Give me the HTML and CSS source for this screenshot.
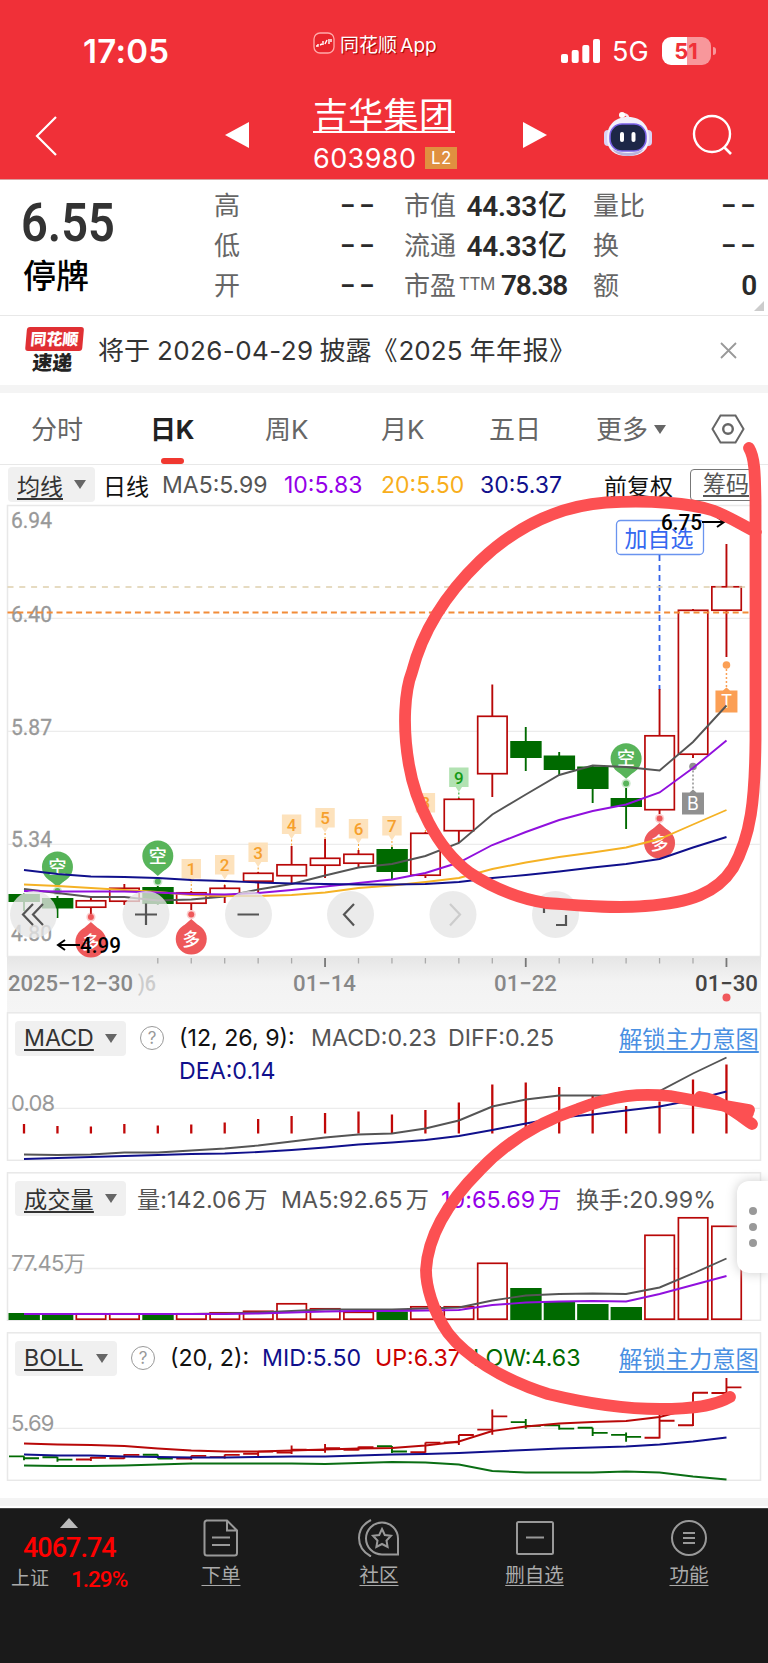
FILE: index.html
```html
<!DOCTYPE html>
<html lang="zh-CN">
<head>
	<meta charset="utf-8">
	<title>吉华集团 603980</title>
	<link rel="stylesheet" href="styles.css">
</head>
<body>
<header class="top">
	<div class="status">
		<span class="clock">17:05</span>
		<div class="brand">
			<svg width="22" height="22" viewBox="0 0 22 22"><rect x="1" y="1" width="20" height="20" rx="6" fill="#e8242c" stroke="#ffa9a9" stroke-width="1.3"/><path d="M3 14h2v-2M7 13l2-1M10 9v4M12 12l2-4M16 7v5M18 7v3" fill="none" stroke="#fff" stroke-width="1.4"/></svg>
			<span>同花顺 App</span>
		</div>
		<div class="signal">
			<svg width="39" height="25" viewBox="0 0 39 25" fill="#fff"><rect y="15" width="7" height="9" rx="2"/><rect x="10.7" y="11" width="7" height="13" rx="2"/><rect x="21.3" y="6" width="7" height="18" rx="2"/><rect x="32" width="7" height="24" rx="2"/></svg>
			<span class="net">5G</span>
			<span class="battery"><b>51</b></span><i class="tip"></i>
		</div>
	</div>
	<div class="nav">
		<svg class="back" width="24" height="42" viewBox="0 0 24 42"><path d="M22 2L3 21L22 40" fill="none" stroke="#fff" stroke-width="2.2"/></svg>
		<svg class="prev" width="24" height="26" viewBox="0 0 24 26"><path d="M24 0V26L0 13Z" fill="#fff"/></svg>
		<div class="stock">
			<a class="name">吉华集团</a>
			<div class="code"><span>603980</span><em>L2</em></div>
		</div>
		<svg class="next" width="24" height="26" viewBox="0 0 24 26"><path d="M0 0V26L24 13Z" fill="#fff"/></svg>
		<svg class="robot" width="48" height="46" viewBox="0 0 48 46">
			<path d="M24 8Q25 4 19 3" fill="none" stroke="#f4e8f4" stroke-width="2.5"/><circle cx="18" cy="4" r="3" fill="#fff"/>
			<rect x="0" y="19" width="8" height="16" rx="4" fill="#d9d2f5"/><rect x="40" y="19" width="8" height="16" rx="4" fill="#d9d2f5"/>
			<path d="M24 6C39 6 45 16 45 27C45 39 38 45 24 45S3 39 3 27C3 16 9 6 24 6Z" fill="#f2f0fb"/>
			<path d="M8 38Q24 46 40 38Q35 45 24 45T8 38Z" fill="#b9b2dc"/>
			<rect x="6" y="13" width="36" height="27" rx="12" fill="#1d2747" stroke="#7b62e8" stroke-width="1.6"/>
			<rect x="16" y="21" width="4" height="10" rx="2" fill="#fff"/><rect x="27.5" y="21" width="4" height="10" rx="2" fill="#fff"/>
		</svg>
		<svg class="search" width="42" height="42" viewBox="0 0 42 42"><circle cx="20" cy="20" r="18" fill="none" stroke="#fff" stroke-width="2.4"/><path d="M32 33L39 40" stroke="#fff" stroke-width="2.6"/></svg>
	</div>
</header>

<section class="quote">
	<div class="price"><b>6.55</b><span>停牌</span></div>
	<dl class="c1">
		<dt>高</dt><dd class="none">--</dd>
		<dt>低</dt><dd class="none">--</dd>
		<dt>开</dt><dd class="none">--</dd>
	</dl>
	<dl class="c2">
		<dt>市值</dt><dd>44.33<i>亿</i></dd>
		<dt>流通</dt><dd>44.33<i>亿</i></dd>
		<dt>市盈<sup>TTM</sup></dt><dd class="pe">78.38</dd>
	</dl>
	<dl class="c3">
		<dt>量比</dt><dd class="none">--</dd>
		<dt>换</dt><dd class="none">--</dd>
		<dt>额</dt><dd>0</dd>
	</dl>
	<i class="corner"></i>
</section>

<section class="notice">
	<div class="express"><b>同花顺</b><span>速递</span></div>
	<p>将于<span class="d1">2026-04-29</span>披露<span class="bk">《</span>2025<span class="d2">年年报》</span></p>
	<svg width="17" height="17" viewBox="0 0 17 17"><path d="M1 1L16 16M16 1L1 16" stroke="#999" stroke-width="1.8"/></svg>
</section>

<nav class="tabs">
	<span>分时</span>
	<span class="on">日K</span>
	<span>周K</span>
	<span>月K</span>
	<span>五日</span>
	<span>更多<i class="tri"></i></span>
	<svg width="34" height="30" viewBox="0 0 34 30" fill="none" stroke="#666" stroke-width="2"><path d="M9.500 1.500H24.500L32.500 15L24.500 28.500H9.500L1.500 15Z"/><circle cx="17" cy="15" r="4.800" stroke-width="2.400"/></svg>
</nav>

<div class="ma">
	<span class="pill"><u>均线</u><i class="tri"></i></span>
	<span class="blk">日线</span>
	<span>MA5:5.99</span>
	<span class="purple">10:5.83</span>
	<span class="yellow">20:5.50</span>
	<span class="navy">30:5.37</span>
	<span class="blk">前复权</span>
	<span class="chips"><u>筹码</u></span>
</div>

<svg id="kline" width="768" height="508" viewBox="0 504 768 508">
	<defs>
		<linearGradient id="fade" x1="0" y1="0" x2="0" y2="1"><stop offset="0" stop-color="#e6e6e6"/><stop offset=".45" stop-color="#f3f3f3"/><stop offset="1" stop-color="#f5f5f5"/></linearGradient>
	</defs>
	<rect x="7" y="957" width="754" height="55" fill="url(#fade)"/>
	<rect x="7.500" y="505.500" width="753" height="451" fill="#fff" stroke="#e8e8e8" stroke-width="1.500"/>
	<path d="M8 618.300H760M8 731.300H760M8 844.300H760" stroke="#ececec" stroke-width="1.300"/>
	<g class="axis">
		<text x="11" y="528" textLength="41" lengthAdjust="spacingAndGlyphs">6.94</text>
		<text x="11" y="621.500" textLength="41" lengthAdjust="spacingAndGlyphs">6.40</text>
		<text x="11" y="734.500" textLength="41" lengthAdjust="spacingAndGlyphs">5.87</text>
		<text x="11" y="847" textLength="41" lengthAdjust="spacingAndGlyphs">5.34</text>
		<text x="11" y="941" textLength="41" lengthAdjust="spacingAndGlyphs">4.80</text>
	</g>
	<rect x="616.500" y="520.500" width="87" height="34" rx="4" fill="#fff" stroke="#6a94ef" stroke-width="1.300"/>
	<text x="659" y="546.500" class="fav">加自选</text>
	<path d="M659.500 555V690" stroke="#3263e8" stroke-width="1.800" stroke-dasharray="6 4"/>
	<g id="candles"></g>
	<path d="M7.500 587H746" stroke="#decfad" stroke-width="1.700" stroke-dasharray="6 5.800"/>
	<path d="M7.500 612.500H752" stroke="#f28c38" stroke-width="2" stroke-dasharray="6 3.800"/>
	<g id="pins"></g>
	<g id="averages"></g>
	<g class="mark">
		<text x="661" y="530" textLength="41" lengthAdjust="spacingAndGlyphs">6.75</text>
		<path d="M702 522H724M717 517L724 522L717 527"/>
		<path d="M80 945H58M65 940L58 945L65 950"/>
		<text x="80" y="953" textLength="41" lengthAdjust="spacingAndGlyphs">4.99</text>
	</g>
	<g id="ticks"></g>
	<g class="date">
		<text x="8" y="991" textLength="125" lengthAdjust="spacingAndGlyphs">2025−12−30</text>
		<text x="138" y="991" textLength="18" lengthAdjust="spacingAndGlyphs" class="ghost">)6</text>
		<text x="293" y="991" textLength="63" lengthAdjust="spacingAndGlyphs">01−14</text>
		<text x="494" y="991" textLength="63" lengthAdjust="spacingAndGlyphs">01−22</text>
		<text x="695" y="991" textLength="63" lengthAdjust="spacingAndGlyphs" class="last">01−30</text>
	</g>
	<circle cx="726.500" cy="997.500" r="4" fill="#f0585c"/>
	<g class="tools">
		<circle cx="33.500" cy="914.500" r="23.500"/><circle cx="146" cy="914.500" r="23.500"/><circle cx="248.500" cy="914.500" r="23.500"/>
		<circle cx="350.500" cy="914.500" r="23.500"/><circle cx="453" cy="914.500" r="23.500"/><circle cx="555.500" cy="914.500" r="23.500"/>
		<path d="M33 904L23 914.500L33 925M43 904L33 914.500L43 925M135 914.500H157M146 903.500V925M237.500 914.500H259M354 904L344 914.500L354 925.500"/>
		<path d="M450 904L460 914.500L450 925.500" class="off"/>
		<path d="M566 915V925H556M554 904H544V913"/>
	</g>
</svg>

<section class="panel">
	<svg id="macd" class="plot" width="768" height="149" viewBox="0 1012 768 149">
		<rect x="7.500" y="1012.800" width="753" height="147.500" class="frame"/>
		<path d="M8 1108.300H760" class="grid"/>
	</svg>
	<div class="legend macd">
		<span class="pill"><u>MACD</u><i class="tri"></i></span>
		<i class="help">?</i>
		<span class="blk">(12, 26, 9):</span>
		<span>MACD:0.23</span>
		<span>DIFF:0.25</span>
		<a>解锁主力意图</a>
		<span class="navy dea">DEA:0.14</span>
	</div>
	<span class="scale">0.08</span>
</section>

<section class="panel">
	<svg id="volume" class="plot" width="768" height="149" viewBox="0 1172 768 149">
		<rect x="7.500" y="1172.800" width="753" height="147.500" class="frame"/>
		<path d="M8 1268.500H760" class="grid"/>
	</svg>
	<div class="legend volume">
		<span class="pill"><u>成交量</u><i class="tri"></i></span>
		<span>量:142.06<i>万</i></span>
		<span>MA5:92.65<i>万</i></span>
		<span class="purple">10:65.69<i>万</i></span>
		<span>换手:20.99%</span>
	</div>
	<span class="scale">77.45万</span>
	<div class="handle"><i></i><i></i><i></i></div>
</section>

<section class="panel">
	<svg id="boll" class="plot" width="768" height="149" viewBox="0 1332 768 149">
		<rect x="7.500" y="1332.800" width="753" height="147.500" class="frame"/>
		<path d="M8 1428.300H760" class="grid"/>
	</svg>
	<div class="legend boll">
		<span class="pill"><u>BOLL</u><i class="tri"></i></span>
		<i class="help">?</i>
		<span class="blk">(20, 2):</span>
		<span class="navy">MID:5.50</span>
		<span class="red">UP:6.37</span>
		<span class="green">LOW:4.63</span>
		<a>解锁主力意图</a>
	</div>
	<span class="scale">5.69</span>
</section>

<footer class="bar">
	<div class="index">
		<i class="up"></i>
		<b>4067.74</b>
		<p><span>上证</span><em>1.29%</em></p>
	</div>
	<a>
		<svg width="36" height="38" viewBox="0 0 36 38"><path d="M3 1.500H24L34 11.500V34Q34 36.500 31.500 36.500H4Q1.500 36.500 1.500 34V4Q1.500 1.500 4 1.500M24 1.500V11.500H34M9 18.500H27M9 26H27"/></svg>
		<span>下单</span>
	</a>
	<a>
		<svg width="42" height="38" viewBox="0 0 42 38"><path d="M24 3.500A16 16 0 0 0 24 35.500H40V19.500A16 16 0 0 0 24 3.500Z"/><path d="M24 10L26.800 16L33 16.800L28.500 21.500L29.600 28L24 25L18.400 28L19.500 21.500L15 16.800L21.200 16ZM13 1C-3 9 -3 29 13 37.500"/></svg>
		<span>社区</span>
	</a>
	<a>
		<svg width="38" height="38" viewBox="0 0 38 38"><rect x="1" y="3" width="36" height="32" rx="1.500"/><path d="M10 18.500H28"/></svg>
		<span>删自选</span>
	</a>
	<a>
		<svg width="38" height="38" viewBox="0 0 38 38"><circle cx="19" cy="19" r="17"/><path d="M13 14H25M13 19H25M13 24H25"/></svg>
		<span>功能</span>
	</a>
</footer>

<svg class="ink" width="768" height="1663" viewBox="0 0 768 1663">
	<path d="M749 448C755 458 755 475 755.500 500V740C755 800 751 836 733 868C717 893 690 903 645 906C610 909 575 905 546 903C515 898 490 886 470 873C435 847 415 800 409 765C402 725 405 690 412 672C424 625 450 590 480 561C518 525 560 506 606 502.500C650 500 690 503 713 510.500C730 517 740 524 756 532"/>
	<path d="M730 1397C718 1404 700 1409 660 1409C620 1409 585 1403 548 1394C500 1379 465 1355 448 1333C432 1310 426 1285 426 1270C428 1235 450 1200 480 1170C510 1138 545 1120 578 1109C615 1095 640 1093 670 1096L720 1105L749 1110M700 1097C720 1100 735 1112 752 1124M715 1103L748 1113"/>
</svg>
<script src="script.js"></script>
</body>
</html>
```

FILE: styles.css
```css
body {
	margin: 0; background: #fff; color: #333;
	width: 768px; height: 1663px; overflow: hidden; position: relative;
	font-family: Inter, "Noto Sans CJK SC", sans-serif;
}
i, em { font-style: normal; }
dl, dd, p { margin: 0; }
svg { display: block; flex: none; }
span, b, a { white-space: nowrap; }
.tri {
	display: inline-block;
	border: 6.5px solid transparent; border-top: 9px solid #666; border-bottom: 0;
}
.blk { color: #111; }
.purple { color: #9400e8; }
.yellow { color: #f8ae1c; }
.navy { color: #10108c; }
.red { color: #c00; }
.green { color: #006a00; }

/* header */
.top { height: 180px; background: #f03038; color: #fff; border-bottom: 1px solid #d9a0a0; box-sizing: border-box; }
.status { display: grid; grid-template-columns: 313px 248px 1fr; height: 96px; padding-top: 2px; box-sizing: border-box; align-items: center; }
.clock { padding-left: 83px; font-size: 33px; font-weight: 600; letter-spacing: .3px; padding-top: 4px; }
.brand { display: flex; align-items: center; gap: 5px; font-size: 19px; padding-bottom: 12px; text-shadow: 1px 1px 1px #900; }
.brand span { word-spacing: -2px; }
.signal { display: flex; align-items: center; padding-top: 4px; }
.net { font-size: 27px; margin: 0 13px 0 12px; }
.battery {
	width: 49px; height: 28px; border-radius: 9px; color: #f03038; text-align: center; line-height: 28px;
	font-size: 22px; background: linear-gradient(90deg, #fff 51%, #f8979b 51%);
}
.tip { width: 3px; height: 8px; margin-left: 2px; border-radius: 0 4px 4px 0; background: #f8979b; }
.nav { display: flex; align-items: flex-start; height: 83px; }
.back { margin: 19px 0 0 34px; }
.prev { margin: 26px 0 0 167px; }
.stock { width: 145px; margin-left: 64px; }
.name { display: block; font-size: 35px; line-height: 36px; height: 36px; width: 142px; border-bottom: 2px solid #fff; letter-spacing: .3px; margin-top: 1px; box-sizing: border-box; }
.code { display: flex; align-items: center; height: 42px; gap: 9px; font-size: 27px; letter-spacing: .4px; margin-top: 4px; }
.code em { width: 32px; height: 22px; background: #e09040; font-size: 17px; line-height: 22px; text-align: center; }
.next { margin: 26px 0 0 65px; }
.robot { margin: 15px 0 0 57px; }
.search { margin: 18px 0 0 40px; }

/* quote */
.quote { display: flex; height: 135px; position: relative; border-bottom: 1px solid #e8e8e8; }
.price { width: 214px; padding: 14px 0 0 21px; box-sizing: border-box; }
.price b { display: block; font: 600 54px/58px Roboto; transform: scaleX(.87); transform-origin: 0 0; }
.price span { display: block; font-size: 33px; font-weight: 500; line-height: 40px; color: #000; margin-top: 4px; padding-left: 2px; }
.quote dl { display: grid; grid-template-columns: 52px 1fr; grid-auto-rows: 40px; line-height: 40px; padding-top: 6px; font-size: 26px; }
.quote dt { color: #666; white-space: nowrap; }
.quote dd { text-align: right; font: 600 28px/40px Roboto, "Noto Sans CJK SC"; color: #2a2a2a; letter-spacing: -.3px; white-space: nowrap; }
.quote dd i { letter-spacing: 0; font-size: 29px; font-weight: 500; margin-left: 1px; }
.quote dd.pe { letter-spacing: -1.2px; }
.quote dd.none { font: 600 27px/38px Inter; letter-spacing: 2px; transform: scaleX(1.32); transform-origin: 100% 0; margin-right: -2px; }
.quote sup { font: 17px/17px Inter; vertical-align: 5px; margin-left: 3px; letter-spacing: -.5px; }
.c1 { width: 162px; margin-right: 28px; }
.c2 { width: 163px; margin-right: 26px; }
.c3 { width: 164px; }
.corner { position: absolute; right: 4px; bottom: 4px; border: 5px solid #ccc; border-left-color: transparent; border-top-color: transparent; }

/* notice */
.notice { display: flex; align-items: center; height: 69px; border-bottom: 8px solid #f4f4f4; }
.express { width: 57px; margin-left: 25px; text-align: center; font-weight: 900; transform: skewX(-5deg); }
.express b { display: block; background: #e03034; color: #fff; border-radius: 3px; font-size: 16px; line-height: 24px; }
.express span { display: block; color: #222; font-size: 20px; line-height: 24px; }
.notice p { width: 622px; margin-left: 16px; font-size: 26px; white-space: nowrap; padding-bottom: 4px; }
.d1 { margin: 0 6px 0 7px; letter-spacing: .4px; }
.d2 { margin-left: 7px; letter-spacing: .6px; }
.bk { margin-right: 1px; }

/* tabs */
.tabs { display: grid; grid-template-columns: 119px 115px 116px 108px 107px 115px 40px; padding-left: 31px; height: 71px; align-items: center; border-bottom: 1px solid #e8e8e8; font-size: 26px; color: #666; }
.tabs span { line-height: 73px; height: 71px; }
.tabs .on { font-weight: 700; color: #222; position: relative; letter-spacing: -.2px; }
.on::after { content: ""; position: absolute; left: 11px; bottom: 0; width: 23px; height: 6px; border-radius: 3px; background: #f03830; }
.tabs .tri { margin-left: 6px; vertical-align: 5px; }

/* moving averages */
.ma { display: grid; grid-template-columns: 95px 59px 122px 97px 99px 124px 86px 70px; padding-left: 8px; height: 39px; align-items: center; font-size: 23px; color: #555; }
.pill { display: flex; align-items: center; justify-content: space-between; height: 35px; padding: 0 9px 0 9px; border-radius: 4px; background: #f0f0f0; color: #333; box-sizing: border-box; }
.ma .pill { width: 87px; }
u { text-underline-offset: 3px; text-decoration-thickness: 2px; }
.ma .chips { height: 32px; line-height: 29px; border: 1.500px solid #777; border-radius: 4px; padding-left: 12px; box-sizing: border-box; }

/* charts */
.axis text, .date text, .mark text { font: 500 22.500px Roboto; fill: #999; }
.axis text { font-weight: 400; stroke: #999; stroke-width: .3px; }
.date text { fill: #888; }
.date .last { fill: #444; }
.date .ghost { fill: #ccc; }
.mark text { fill: #000; }
.mark path { fill: none; stroke: #000; stroke-width: 2; }
.fav { font-size: 23px; fill: #3568f0; text-anchor: middle; }
.tools circle { fill: #e6e6e6; fill-opacity: .78; }
.tools path { fill: none; stroke: #555; stroke-width: 2.2; }
.tools .off { stroke: #ccc; }
.frame { fill: none; stroke: #e8e8e8; stroke-width: 1.500px; }
.grid { stroke: #ececec; stroke-width: 1.300px; }
.pin { font-size: 18px; font-weight: 500; fill: #fff; text-anchor: middle; }
.flag { font: 500 17px Roboto; text-anchor: middle; }
.panel { position: relative; height: 149px; margin-bottom: 11px; }
.plot { position: absolute; left: 0; top: 0; }
.legend { position: relative; display: grid; align-items: center; grid-auto-rows: 36px 30px; padding: 8px 0 0 15px; font-size: 23.200px; color: #555; }
.legend a { color: #4a90e2; text-decoration: underline; text-underline-offset: 3px; font-size: 23.3px; }
.legend.macd { grid-template-columns: 125px 39px 132px 137px 171px 145px; }
.legend.volume { grid-template-columns: 122px 144px 160px 135px 150px; letter-spacing: .1px; }
.legend.boll { grid-template-columns: 116px 39px 92px 113px 98px 146px 145px; }
.macd .pill { width: 111px; }
.volume .pill { width: 111px; }
.boll .pill { width: 102px; }
.dea { grid-column: 3; }
.help { width: 22px; height: 22px; border: 1.500px solid #999; border-radius: 50%; font-size: 17px; line-height: 22px; text-align: center; color: #999; }
.legend span i { margin-left: 3px; }
.scale { position: absolute; left: 11px; top: 77px; font-size: 22px; line-height: 28px; color: #999; letter-spacing: -.8px; }
.handle {
	position: absolute; right: 0; top: 9px; width: 31px; height: 92px; background: #fff; border-radius: 12px 0 0 12px;
	box-shadow: 0 0 12px #ccc; display: flex; flex-direction: column; align-items: center; justify-content: center; gap: 8px;
}
.handle i { width: 8px; height: 8px; border-radius: 50%; background: #999; }
.ink { position: absolute; left: 0; top: 0; fill: none; stroke: #fc5052; stroke-width: 11.800px; stroke-linecap: round; stroke-linejoin: round; }

/* bottom bar */
.bar { display: grid; grid-template-columns: 143px 156px 160px 151px 158px; height: 155px; margin-top: 27px; background: #1a1a1a; border-top: 1px solid #444; position: relative; box-sizing: border-box; }
.bar::before { content: ""; position: absolute; left: 0; top: -11px; width: 768px; height: 8px; background: #f4f4f4; }
.index { color: #f00; padding-top: 9px; }
.index .up { display: block; width: 0; margin-left: 60px; border: 9px solid transparent; border-bottom: 10px solid #bbb; border-top: 0; }
.index b { display: block; font: 500 27px/40px Roboto; letter-spacing: -1px; padding-left: 23px; }
.index p { display: flex; padding-left: 11px; align-items: center; line-height: 22px; font-size: 19px; color: #aaa; }
.index em { margin-left: 22px; font: 500 22.500px/22px Roboto; letter-spacing: -1px; color: #f00; }
.bar a { display: flex; flex-direction: column; align-items: center; padding-top: 10px; color: #aaa; font-size: 19.500px; line-height: 25px; text-decoration: underline; text-underline-offset: 3px; gap: 6px; }
.bar svg { fill: none; stroke: #999; stroke-width: 2; }
```

FILE: script.js
```js
var RED = '#b80808', GREEN = '#006a00', GREY = '#555', PURPLE = '#9010dd', YELLOW = '#f5b225', NAVY = '#10108c';

function x(i) { return 24 + i * 33.45; }

function add(id, html) { document.getElementById(id).innerHTML += html; }

function line(values, color) {
	var pts = values.map(function(v, i) { return x(i).toFixed(1) + ',' + v; }).join(' ');
	return '<polyline points="' + pts + '" fill="none" stroke="' + color + '" stroke-width="1.9"/>';
}

function stroke(d, color, width) {
	return '<path d="' + d + '" fill="none" stroke="' + color + '" stroke-width="' + width + '"/>';
}

function box(i, top, bottom, up) {
	if (up) return '<rect x="' + (x(i) - 14.6) + '" y="' + (top + .8) + '" width="29.4" height="' + (bottom - top - 1.6) + '" fill="#fff" stroke="' + RED + '" stroke-width="1.7"/>';
	return '<rect x="' + (x(i) - 15.5) + '" y="' + top + '" width="31.4" height="' + (bottom - top) + '" fill="' + GREEN + '"/>';
}

// body top, body bottom, high, low, rising
var days = [
	[894, 902, 893, 911, 0], [898, 908.5, 896, 918, 0], [900, 908, 897, 914, 1], [887.5, 902, 884, 905, 1],
	[887, 904, 886, 905, 0], [892, 904, 891, 910, 1], [887.5, 897, 885, 903, 1], [872.5, 882, 872, 893, 1],
	[864, 876.5, 846, 883, 1], [857.5, 866, 839, 878, 1], [853.5, 864, 850, 868, 1], [849, 872, 847, 879, 0],
	[832.5, 876, 832, 878, 1], [798.5, 831.5, 798, 843, 1], [715.5, 774.5, 684.5, 797, 1], [741, 758, 727, 771, 0],
	[755.5, 770, 752, 775, 0], [766.5, 789, 766, 803, 0], [798, 807, 788, 829, 0], [735, 810.5, 689, 814, 1],
	[609.5, 755, 609, 758, 1], [586, 611, 544, 657, 1]
];

add('candles', days.map(function(d, i) {
	return stroke('M' + x(i) + ' ' + d[2] + 'V' + d[3], d[4] ? RED : GREEN, 1.9) + box(i, d[0], d[1], d[4]);
}).join(''));

add('averages',
	line([889, 893, 897, 897, 900.5, 899.5, 896.5, 889.5, 884, 875.5, 867.5, 864, 856, 843, 814.5, 794.5, 775, 765.5, 767, 770.5, 742, 705.5], GREY) +
	line([884.5, 886, 888, 890, 892, 895, 896, 896, 895, 892.5, 888, 885.5, 882, 878, 869, 862.5, 857, 852.5, 847.5, 839, 824.5, 810], YELLOW) +
	line([891, 891.5, 891.5, 891.5, 892.5, 894, 894.5, 893, 890, 886.5, 883, 879.5, 873, 862.5, 845, 832, 820, 811, 804.5, 792.5, 768, 740.5], PURPLE) +
	line([870, 874, 876.5, 877, 878, 880, 881, 882.5, 883.5, 884, 884.5, 884.5, 884, 882, 878, 875, 871.5, 867.5, 864, 859, 847.5, 837], NAVY));

// numbered flags above candles 5..13
var flags = [859, 855, 842.5, 814.5, 808, 819, 816, 793, 767.5];
add('pins', flags.map(function(top, n) {
	var i = n + 5, cx = x(i), last = n == 8;
	var bg = last ? '#b2e2b2' : '#fde2bc', fg = last ? '#179a17' : '#f6a02c';
	return '<path d="M' + cx + ' ' + (top + 25) + 'V' + days[i][2] + '" stroke="' + fg + '" stroke-dasharray="2 2"/>' +
		'<path d="M' + (cx - 9.7) + ' ' + top + 'h19.4v19.500h-6.500l-3.200 5l-3.200 -5h-6.500z" fill="' + bg + '"/>' +
		'<text class="flag" x="' + cx + '" y="' + (top + 16) + '" fill="' + fg + '">' + (n + 1) + '</text>';
}).join(''));

// long / short pins: index, circle y, dot y
function pin(i, cy, dot, text, color) {
	var cx = x(i), s = dot > cy ? 1 : -1;
	return '<circle cx="' + cx + '" cy="' + dot + '" r="4.600" fill="' + color + '" opacity=".3"/>' +
		'<circle cx="' + cx + '" cy="' + dot + '" r="3" fill="' + color + '"/>' +
		'<circle cx="' + cx + '" cy="' + cy + '" r="15.500" fill="' + color + '"/>' +
		'<path d="M' + (cx - 8) + ' ' + (cy + 13 * s) + 'H' + (cx + 8) + 'L' + cx + ' ' + (cy + 20 * s) + 'Z" fill="' + color + '"/>' +
		'<text class="pin" x="' + cx + '" y="' + (cy + 6.5) + '">' + text + '</text>';
}
add('pins',
	pin(1, 867, 891, '空', '#58b45a') + pin(4, 856, 881.5, '空', '#58b45a') + pin(18, 758.700, 783.500, '空', '#58b45a') +
	pin(2, 942, 917, '多', '#ee585a') + pin(5, 939, 914.500, '多', '#ee585a') + pin(19, 843, 818.500, '多', '#ee585a'));

function trade(i, dot, top, text, color) {
	var cx = x(i);
	return '<circle cx="' + cx + '" cy="' + dot + '" r="3.800" fill="' + color + '"/>' +
		'<path d="M' + cx + ' ' + dot + 'V' + top + '" stroke="' + color + '" stroke-width="1.500" stroke-dasharray="2 2"/>' +
		'<path d="M' + (cx - 11) + ' ' + top + 'h7.500l3.500 -3l3.500 3h7.500v22h-22z" fill="' + color + '"/>' +
		'<text x="' + cx + '" y="' + (top + 17.500) + '" font-size="18" fill="#fff" text-anchor="middle">' + text + '</text>';
}
add('pins', trade(20, 766.500, 792.500, 'B', '#909090') + trade(21, 665, 690.500, 'T', '#fb9f55'));

for (var i = 4; i < 22; i++) {
	var major = i == 9 || i == 15 || i == 21;
	add('ticks', stroke('M' + x(i) + ' 958V' + (major ? 967 : 963.5), major ? '#777' : '#aaa', major ? 1.8 : 1.3));
}

add('macd',
	[1124, 1126, 1126.5, 1124, 1125.5, 1124.5, 1122.5, 1119, 1116, 1113, 1111.5, 1114.5, 1110, 1102.5, 1084.5, 1082.5, 1087, 1096, 1106, 1101.5, 1079.5, 1064.5].map(function(top, i) {
		return stroke('M' + x(i) + ' ' + top + 'V1133.500', '#c00808', 2.3);
	}).join('') +
	line([1154.5, 1155, 1154.5, 1152.5, 1152.5, 1150.5, 1148.5, 1145.5, 1141.5, 1137.5, 1134.5, 1133.5, 1128.5, 1120.5, 1106.5, 1099.5, 1095.5, 1095.5, 1096, 1091, 1073.5, 1057.5], GREY) +
	line([1159, 1158, 1157, 1156, 1155, 1154, 1153.5, 1152, 1150, 1147.5, 1144.5, 1142.5, 1140, 1136, 1130, 1123.5, 1117.5, 1114.5, 1110.5, 1106.5, 1100, 1091.5], NAVY));

add('volume',
	[1313, 1313, 1313, 1313, 1313, 1313, 1312, 1310.5, 1303, 1308, 1311.5, 1311.5, 1306, 1306, 1262.5, 1288, 1302, 1304, 1307, 1234.5, 1217, 1225.5].map(function(top, i) {
		return box(i, top, 1320, days[i][4]);
	}).join('') +
	line([1314, 1314, 1314, 1314, 1314, 1314, 1313.5, 1312.5, 1311, 1309.5, 1309.5, 1309.5, 1308.5, 1307.5, 1300.5, 1295.5, 1294, 1293.5, 1294, 1287.5, 1273.5, 1258.5], GREY) +
	line([1314, 1314, 1314, 1314, 1314, 1314, 1314, 1313.5, 1312.5, 1311.5, 1311, 1311, 1310.5, 1310, 1305, 1302.5, 1301.5, 1301, 1301.5, 1294, 1285, 1276], PURPLE));

// same prices as the candles, on the flatter BOLL scale
function b(v) { return (1387.5 + (v - 586.5) * .224).toFixed(1); }
add('boll', days.map(function(d, i) {
	var open = d[4] ? d[1] : d[0], close = d[4] ? d[0] : d[1];
	return stroke('M' + (x(i) - 15) + ' ' + b(open) + 'H' + x(i) + 'M' + x(i) + ' ' + b(d[2]) + 'V' + b(d[3]) + 'M' + x(i) + ' ' + b(close) + 'H' + (x(i) + 15), d[4] ? RED : GREEN, 1.9);
}).join('') +
	line([1443.5, 1444.5, 1445, 1446, 1448.5, 1450.5, 1451.5, 1451.5, 1450.5, 1449.5, 1448.5, 1448, 1445.5, 1441.5, 1431, 1426.5, 1423.5, 1422, 1421, 1417, 1408, 1398], RED) +
	line([1454.5, 1455.5, 1455.5, 1456.5, 1457, 1457.5, 1457.5, 1457, 1456.5, 1456.5, 1455.5, 1454.5, 1454, 1453, 1451.5, 1450, 1448.5, 1447.5, 1446.5, 1444.5, 1441.5, 1437.5], NAVY) +
	line([1465.5, 1466, 1466, 1465.5, 1464.5, 1463.5, 1463.5, 1463.5, 1463.5, 1464, 1463, 1462, 1462.5, 1464.5, 1471, 1472.5, 1472.5, 1472.5, 1471.5, 1472.5, 1476.5, 1479.5], '#0a6e14'));
```
